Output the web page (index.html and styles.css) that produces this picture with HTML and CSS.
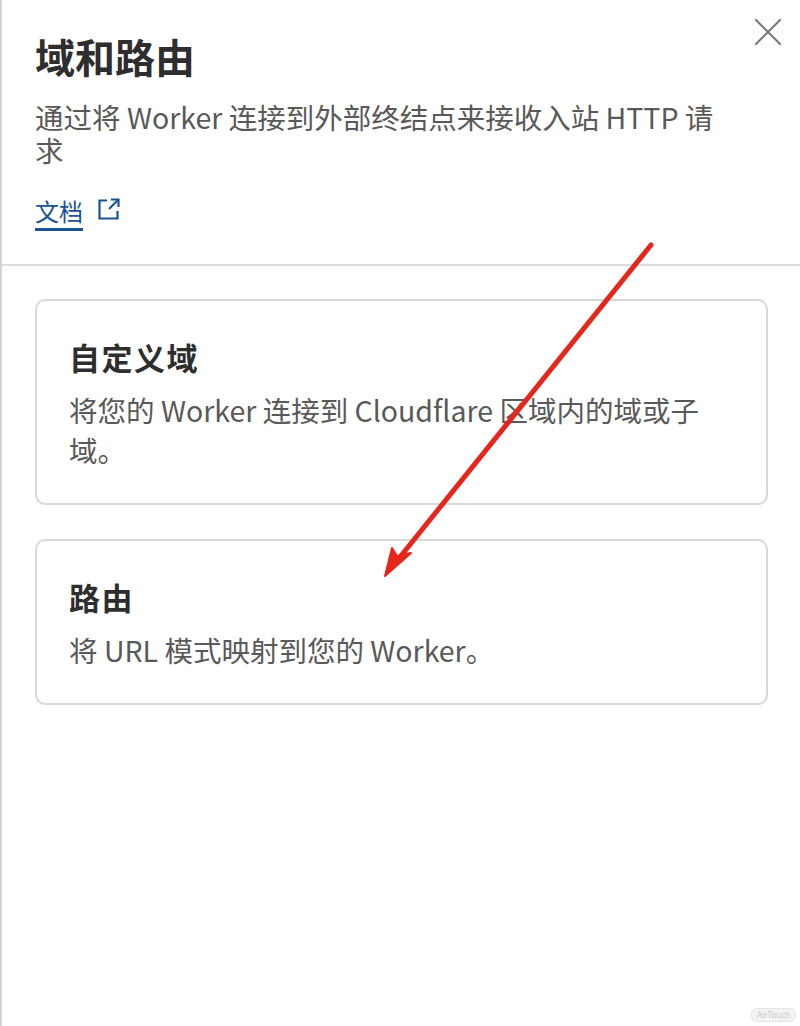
FILE: index.html
```html
<!DOCTYPE html>
<html lang="zh-CN">
<head>
<meta charset="utf-8">
<link rel="stylesheet" href="styles.css">
</head>
<body>
<div class="panel">
  <header class="header">
    <h1 class="title">域和路由</h1>
    <p class="subtitle">通过将 Worker 连接到外部终结点来接收入站 HTTP 请求</p>
    <a class="doc-link" href="#"><span class="doc-text">文档</span><svg class="ext-icon" width="24" height="24" viewBox="0 0 24 24" fill="none" stroke="#1b5294" stroke-width="2.2"><path d="M10 3.5H2.5V21.5H20.5V14"/><path d="M12 12L21 3"/><path d="M14 2.5H21.5V10"/></svg></a>
    <button class="close" aria-label="关闭"><svg width="28" height="28" viewBox="0 0 28 28" stroke="#7a7a7a" stroke-width="2.2" stroke-linecap="round"><path d="M2 2L26 26M26 2L2 26"/></svg></button>
  </header>
  <div class="divider"></div>
  <div class="cards">
    <div class="card">
      <h2 class="card-title">自定义域</h2>
      <p class="card-desc">将您的 Worker 连接到 Cloudflare 区域内的域或子域。</p>
    </div>
    <div class="card">
      <h2 class="card-title">路由</h2>
      <p class="card-desc">将 URL 模式映射到您的 Worker。</p>
    </div>
  </div>
  <svg class="annot" width="800" height="1026" viewBox="0 0 800 1026">
    <path d="M651 245L396 562" stroke="#e5261b" stroke-width="5" stroke-linecap="round" fill="none"/>
    <path d="M385 576L392 548L397 556L411 553Z" fill="#e5261b" stroke="#e5261b" stroke-width="2" stroke-linejoin="round"/>
  </svg>
  <span class="watermark">AirTouch</span>
</div>
</body>
</html>
```

FILE: styles.css
```css
* { box-sizing: border-box; }
html, body { margin: 0; padding: 0; background: #ffffff; }
body {
  font-family: "Noto Sans CJK SC", "Noto Sans", sans-serif;
  color: #333;
}
.panel {
  position: relative;
  width: 800px;
  min-height: 1026px;
  border-left: 2px solid #d4d4d4;
  overflow: hidden;
}
.header {
  position: relative;
  padding: 32px 60px 0 33px;
  height: 264px;
}
.title {
  margin: 0;
  font-size: 40px;
  line-height: 48px;
  font-weight: 700;
  color: #2e2e2e;
}
.subtitle {
  margin: 20px 0 0 0;
  max-width: 690px;
  font-size: 28.5px;
  line-height: 33px;
  color: #595959;
  font-weight: 400;
}
.doc-link {
  display: inline-flex;
  align-items: flex-start;
  gap: 14px;
  margin-top: 30px;
  text-decoration: none;
  color: #1b5294;
  font-size: 24px;
  line-height: 29px;
}
.doc-text {
  border-bottom: 3px solid #1b5294;
  padding-bottom: 3px;
}
.ext-icon { margin-top: 1px; }
.close {
  position: absolute;
  top: 18px;
  right: 18px;
  padding: 0;
  border: 0;
  background: none;
  line-height: 0;
}
.divider {
  height: 2px;
  background: #dcdcdc;
}
.cards {
  display: flex;
  flex-direction: column;
  gap: 34px;
  padding: 33px 32px 0 33px;
}
.card {
  border: 2px solid #d9d9d9;
  border-radius: 10px;
  padding: 36px 32px 33px 32px;
  display: flex;
  flex-direction: column;
  gap: 13px;
}
.card-title {
  margin: 0;
  font-size: 31px;
  line-height: 40px;
  font-weight: 700;
  color: #2e2e2e;
  letter-spacing: 1.5px;
}
.card-desc {
  margin: 0;
  font-size: 28.5px;
  line-height: 40px;
  color: #595959;
}
.annot {
  position: absolute;
  left: -2px;
  top: 0;
  pointer-events: none;
}
.watermark {
  position: absolute;
  right: 4px;
  bottom: 4px;
  font-family: "Noto Sans", sans-serif;
  font-size: 8px;
  line-height: 10px;
  padding: 1px 5px;
  color: #c9c9c9;
  background: #f3f3f3;
  border: 1px solid #e6e6e6;
  border-radius: 6px;
}
```
